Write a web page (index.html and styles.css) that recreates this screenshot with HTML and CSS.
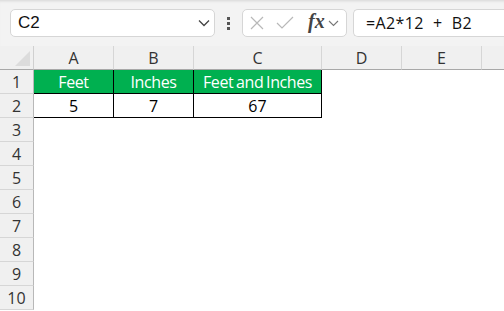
FILE: index.html
```html
<!DOCTYPE html>
<html lang="en">
<head>
    <meta charset="UTF-8">
    <title>Feet and Inches</title>
    <link rel="stylesheet" href="styles.css">
</head>
<body>
    <div class="toolbar">
        <div class="name-box">
            <span>C2</span>
            <svg class="chev" width="12" height="8" viewBox="0 0 12 8"><path d="M1 1.5 L6 6.5 L11 1.5" fill="none" stroke="#444" stroke-width="1.3"/></svg>
        </div>
        <div class="dots"><i></i><i></i><i></i></div>
        <div class="fx-box">
            <svg width="14" height="14" viewBox="0 0 14 14"><path d="M1 1 L13 13 M13 1 L1 13" stroke="#b8b8b8" stroke-width="1.2"/></svg>
            <svg width="18" height="14" viewBox="0 0 18 14"><path d="M1 7 L6 12 L17 1" fill="none" stroke="#b8b8b8" stroke-width="1.2"/></svg>
            <span class="fx">fx</span>
            <svg width="11" height="7" viewBox="0 0 11 7"><path d="M1 1 L5.5 5.5 L10 1" fill="none" stroke="#777" stroke-width="1.1"/></svg>
        </div>
        <div class="formula">=A2*12  +  B2</div>
    </div>

    <div class="sheet">
        <div class="corner"><div class="tri"></div></div>
        <div class="col-head">A</div>
        <div class="col-head">B</div>
        <div class="col-head">C</div>
        <div class="col-head">D</div>
        <div class="col-head">E</div>
        <div class="col-head last"></div>

        <div class="row-head">1</div>
        <div class="cell title">Feet</div>
        <div class="cell title">Inches</div>
        <div class="cell title">Feet and Inches</div>
        <div class="cell"></div><div class="cell"></div><div class="cell"></div>

        <div class="row-head">2</div>
        <div class="cell data">5</div>
        <div class="cell data">7</div>
        <div class="cell data">67</div>
        <div class="cell"></div><div class="cell"></div><div class="cell"></div>

        <div class="row-head">3</div><div class="cell"></div><div class="cell"></div><div class="cell"></div><div class="cell"></div><div class="cell"></div><div class="cell"></div>
        <div class="row-head">4</div><div class="cell"></div><div class="cell"></div><div class="cell"></div><div class="cell"></div><div class="cell"></div><div class="cell"></div>
        <div class="row-head">5</div><div class="cell"></div><div class="cell"></div><div class="cell"></div><div class="cell"></div><div class="cell"></div><div class="cell"></div>
        <div class="row-head">6</div><div class="cell"></div><div class="cell"></div><div class="cell"></div><div class="cell"></div><div class="cell"></div><div class="cell"></div>
        <div class="row-head">7</div><div class="cell"></div><div class="cell"></div><div class="cell"></div><div class="cell"></div><div class="cell"></div><div class="cell"></div>
        <div class="row-head">8</div><div class="cell"></div><div class="cell"></div><div class="cell"></div><div class="cell"></div><div class="cell"></div><div class="cell"></div>
        <div class="row-head">9</div><div class="cell"></div><div class="cell"></div><div class="cell"></div><div class="cell"></div><div class="cell"></div><div class="cell"></div>
        <div class="row-head">10</div><div class="cell"></div><div class="cell"></div><div class="cell"></div><div class="cell"></div><div class="cell"></div><div class="cell"></div>
    </div>
</body>
</html>
```

FILE: styles.css
```css
* {
    margin: 0;
    padding: 0;
    box-sizing: border-box;
}

body {
    width: 504px;
    height: 311px;
    overflow: hidden;
    background: #fff;
    font-family: 'Open Sans', sans-serif;
    color: #222;
}

.toolbar {
    height: 46px;
    background: #f3f3f3;
    box-shadow: inset 0 3px 3px -2px rgba(0, 0, 0, 0.12);
    display: flex;
    align-items: center;
    padding: 0 0 0 10px;
}

.name-box {
    width: 205px;
    height: 28px;
    background: #fff;
    border: 1px solid #d6d6d6;
    border-radius: 5px;
    display: flex;
    align-items: center;
    justify-content: space-between;
    padding: 0 4px 0 7px;
    font-family: 'Liberation Sans', sans-serif;
    font-size: 17px;
    color: #111;
}

.dots {
    width: 27px;
    display: flex;
    flex-direction: column;
    align-items: center;
    gap: 2px;
}

.dots i {
    width: 3px;
    height: 3px;
    background: #555;
}

.fx-box {
    width: 105px;
    height: 28px;
    background: #fff;
    border: 1px solid #d6d6d6;
    border-radius: 5px;
    display: flex;
    align-items: center;
    gap: 12px;
    padding: 0 0 0 7px;
}

.fx {
    font-family: 'Liberation Serif', serif;
    font-style: italic;
    font-weight: bold;
    font-size: 20px;
    color: #444;
    margin: 0 -9px 3px 2px;
}

.formula {
    flex: 1;
    height: 28px;
    margin-left: 6px;
    background: #fff;
    border: 1px solid #d6d6d6;
    border-right: none;
    border-radius: 5px 0 0 5px;
    display: flex;
    align-items: center;
    padding-left: 12px;
    font-size: 16px;
    letter-spacing: 0.4px;
    color: #111;
    white-space: pre;
}

.sheet {
    display: grid;
    grid-template-columns: 34px 80px 80px 128px 80px 80px 1fr;
    grid-template-rows: 24px repeat(10, 24px);
}

.corner {
    background: #f0f0f0;
    border-right: 1px solid #d0d0d0;
    border-bottom: 1px solid #a8a8a8;
    position: relative;
}

.tri {
    position: absolute;
    right: 3px;
    bottom: 3px;
    width: 0;
    height: 0;
    border-left: 15px solid transparent;
    border-bottom: 15px solid #dcdcdc;
}

.col-head {
    background: #f0f0f0;
    border-right: 1px solid #d6d6d6;
    border-bottom: 1px solid #a8a8a8;
    display: flex;
    align-items: center;
    justify-content: center;
    font-size: 16px;
    color: #333;
}

.col-head.last {
    border-right: none;
}

.row-head {
    background: #f0f0f0;
    border-right: 1px solid #b8b8b8;
    border-bottom: 1px solid #d6d6d6;
    display: flex;
    align-items: center;
    justify-content: center;
    font-size: 16px;
    color: #333;
}

.cell {
    display: flex;
    align-items: center;
    justify-content: center;
    font-size: 16px;
}

.cell.title {
    background: #00b050;
    color: #fff;
    border-right: 1px solid #000;
    border-bottom: 1px solid #000;
    letter-spacing: -0.4px;
    word-spacing: -1px;
}

.cell.data {
    color: #000;
    border-right: 1px solid #000;
    border-bottom: 1px solid #000;
}
```
